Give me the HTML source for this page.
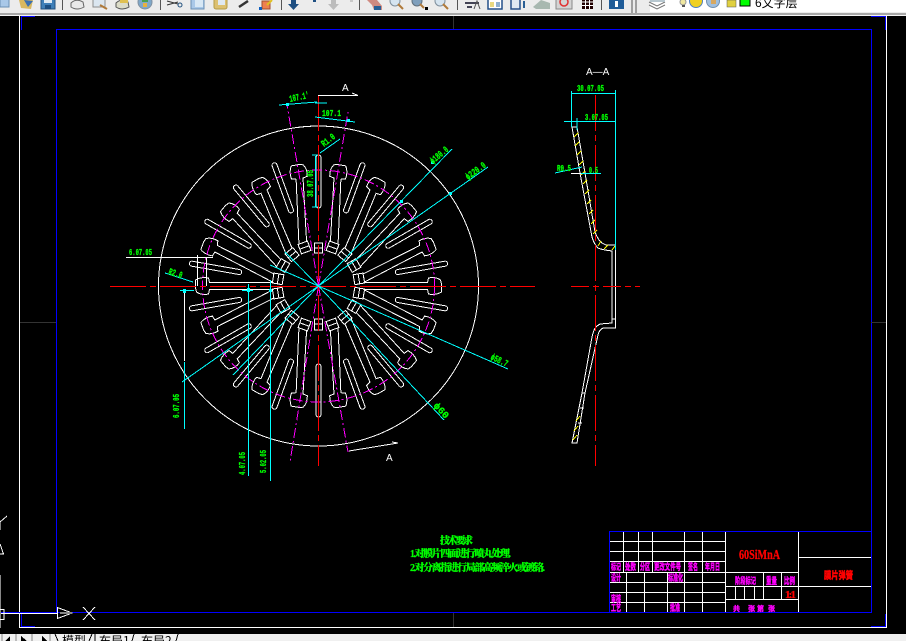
<!DOCTYPE html>
<html><head><meta charset="utf-8"><style>
html,body{margin:0;padding:0;background:#000}
body{width:906px;height:641px;overflow:hidden;position:relative}
svg{position:absolute;left:0;top:0;display:block}
path,rect,circle,use{shape-rendering:crispEdges}
.ic path,.ic circle,.ic rect{shape-rendering:auto}
.g{fill:#0f0;stroke:#0f0;stroke-width:.3;font-family:"Liberation Mono",monospace;font-size:9.5px;font-weight:bold}
.m{fill:#f0f;stroke:#f0f;stroke-width:.3;font-family:"Noto Sans CJK SC","WenQuanYi Zen Hei",sans-serif;font-size:9px;font-weight:900}
.z{fill:#0f0;stroke:#0f0;stroke-width:.25;font-family:"Liberation Serif","Noto Serif CJK SC",serif;font-size:10px;font-weight:900}
</style></head><body>
<svg width="906" height="641" viewBox="0 0 906 641" xmlns="http://www.w3.org/2000/svg">
<defs>
<g id="k"><path d="M4 -46L-3.500 -109L-8 -110Q-9.500 -117 -6 -122L-2 -123L6 -123Q9.500 -117 8 -110L3.500 -109L12 -44.600"/><path d="M3.100 -46.200L12.900 -44.400L11.200 -34.600L1.300 -36.400Z M2.200 -41.300L12 -39.500"/></g>
<g id="h"><path d="M-3.500 -45L-3.500 -109L-8 -110Q-9.500 -117 -6 -122L-2 -123L6 -123Q9.500 -117 8 -110L3.500 -109L3.500 -45"/></g>
<rect id="s" x="-2.500" y="-131" width="5" height="53" rx="2.500"/>
</defs>
<rect width="906" height="641" fill="#000"/>
<!-- frames -->
<g fill="none">
<path d="M19.500 15V627.500H886.500V15" stroke="#fff"/>
<rect x="56.500" y="29.500" width="815" height="583" stroke="#00f"/>
<path d="M0 612.500H56" stroke="#00f"/>
<path d="M21.500 30V16.500H35M871 16.500H885.500V30M21.500 614V626.500H35M871 626.500H885.500V614" stroke="#00f"/>
<path d="M20 322.500H56M871 322.500H886M453.500 16V29M453.500 613V627" stroke="#333"/>
<path d="M0 613.500H57" stroke="#fff"/>
<path d="M0.500 575V634" stroke="#888"/>
<path d="M0 609.500H4V619.500H0" stroke="#fff"/>
</g>
<g fill="none" stroke="#fff"><path d="M57.500 607.500L72 613L57.500 618.500Z"/><path d="M83 607L95 620M95 607L83 620"/><path d="M0 530V522L7 516M0 544L3.500 554H0"/></g>
<path d="M60 613H72" stroke="#888" stroke-width="2"/>
<!-- disc -->
<circle cx="318.500" cy="286" r="160" fill="none" stroke="#fff" stroke-width="1"/>
<g transform="translate(318.500 286)" fill="none" stroke="#fff" stroke-width="1">
<use href="#k" transform="rotate(10)"/><use href="#k" transform="rotate(30)"/><use href="#k" transform="rotate(50)"/><use href="#k" transform="rotate(70)"/>
<use href="#k" transform="rotate(110) scale(-1 1)"/><use href="#k" transform="rotate(130) scale(-1 1)"/><use href="#k" transform="rotate(150) scale(-1 1)"/><use href="#k" transform="rotate(170) scale(-1 1)"/>
<use href="#k" transform="rotate(-10) scale(-1 1)"/><use href="#k" transform="rotate(-30) scale(-1 1)"/><use href="#k" transform="rotate(-50) scale(-1 1)"/><use href="#k" transform="rotate(-70) scale(-1 1)"/>
<use href="#k" transform="rotate(-110)"/><use href="#k" transform="rotate(-130)"/><use href="#k" transform="rotate(-150)"/><use href="#k" transform="rotate(-170)"/>
<use href="#h" transform="rotate(90)"/><use href="#h" transform="rotate(-90)"/>
<use href="#s"/><use href="#s" transform="rotate(20)"/><use href="#s" transform="rotate(40)"/><use href="#s" transform="rotate(60)"/><use href="#s" transform="rotate(80)"/><use href="#s" transform="rotate(100)"/><use href="#s" transform="rotate(120)"/><use href="#s" transform="rotate(140)"/><use href="#s" transform="rotate(160)"/><use href="#s" transform="rotate(180)"/><use href="#s" transform="rotate(-20)"/><use href="#s" transform="rotate(-40)"/><use href="#s" transform="rotate(-60)"/><use href="#s" transform="rotate(-80)"/><use href="#s" transform="rotate(-100)"/><use href="#s" transform="rotate(-120)"/><use href="#s" transform="rotate(-140)"/><use href="#s" transform="rotate(-160)"/>
<path d="M-4 -43H4V-33H-4ZM-4 -38H4M-4 44H4V33H-4ZM-4 38H4"/>
<circle r="116" stroke="#f0f" stroke-dasharray="10 3 2 3"/>
</g>
<g fill="none" stroke="#f0f" stroke-width="1" stroke-dasharray="10 3 2 3">
<path d="M318.500 286L287 105M318.500 286L348 112M318.500 286L290 462M318.500 286L348 452"/>
</g>
<!-- section -->
<g fill="none" stroke="#fff" stroke-width="1">
<path d="M572 127H577L585 173L595 232Q598 240 602 243L606 245H615.500V328H603Q599 330 598 335L585 393L577 443H572L582 393L592 337Q594 328 597 326L600 324L612 323V251L605 250Q600 249 598 248Q594 244 592 237L580 173Z"/>
<path d="M612 319H616M582 393H585M580 408H584M578 423H582"/>
</g>
<g stroke="#ff0" stroke-width="1" fill="none">
<path d="M574 137L578 133M575 146L579 142M577 155L581 151M579 165L583 161M581 175L585 171M583 184L587 180M585 194L589 190M587 204L591 200M589 214L593 210M591 224L595 220M593 234L597 230M598 246L601 241M604 249L608 245M612 250L615 246M573 440L577 435M574 431L578 426M576 421L580 416"/>
</g>
<!-- centre lines -->
<g stroke="#f00" stroke-width="1" fill="none">
<path d="M110 286.500H535" stroke-dasharray="36 4 6 4"/>
<path d="M318.500 95V466" stroke-dasharray="36 4 6 4"/>
<path d="M571 286.500H640" stroke-dasharray="18 4 6 4"/>
<path d="M595.500 95V466" stroke-dasharray="36 4 6 4"/>
</g>
<!-- cyan -->
<g stroke="#0ff" stroke-width="1" fill="none">
<path d="M318.500 286L452 149M318.500 286L488 167M318.500 286L508 369M318.500 286L444 420M318.500 286L182 382M318.500 286L233 375M318.500 286L270 265M318.500 286L285 252"/>
<path d="M184.500 362V429M248.500 284V476M270.500 280V481M180 290.500H194M242 290.500H253M165 273L193 282"/>
<path d="M279 105L317 102M315 117L355 122M320 153L340 139M315 103H327"/>
<path d="M315.500 156V207M312 155H318M312 207H318"/>
<path d="M571.500 91V127M615.500 90V250M571.500 93.500H615.500M564 121.500H615M577 118V130M555 173L582 167M581 173.500H601"/>
</g>
<g fill="#0ff"><path d="M183 289h3v4h-3zM247 288h3v4h-3zM269 289h3v3h-3zM286 103h3v3h-3zM347 119h3v3h-3zM400 200h3v3h-3zM449 192h3v3h-3zM431 161h3v3h-3z"/></g>
<!-- white dims -->
<g stroke="#fff" stroke-width="1" fill="none">
<path d="M126 257.500H213M197.500 255V286M206.500 257V286M184.500 293V361M318 95.500H358M349 451L398 443M358 95.500L352 93M398 443L392 442M571 173.500H581"/>
</g>
<g fill="#fff" font-family="Liberation Sans,sans-serif" font-size="10"><text x="342" y="91">A</text><text x="386" y="461">A</text><text x="586" y="75">A—A</text></g>
<!-- labels -->
<text class="g" x="129" y="255" textLength="23" lengthAdjust="spacingAndGlyphs">6.07.05</text>
<text class="g" transform="translate(168 274)rotate(18)" textLength="14" lengthAdjust="spacingAndGlyphs">R2.0</text>
<text class="g" transform="translate(290 102)rotate(-12)" textLength="20" lengthAdjust="spacingAndGlyphs">107.1'</text>
<text class="g" x="322" y="116" textLength="19" lengthAdjust="spacingAndGlyphs">107.1</text>
<text class="g" transform="translate(324 147)rotate(-38)" textLength="15" lengthAdjust="spacingAndGlyphs">R1.0</text>
<text class="g" transform="translate(313 197)rotate(-90)" textLength="27" lengthAdjust="spacingAndGlyphs">38.07.05</text>
<text class="g" transform="translate(433 164)rotate(-40)" textLength="21" lengthAdjust="spacingAndGlyphs">ϕ180.0</text>
<text class="g" transform="translate(468 180)rotate(-36)" textLength="23" lengthAdjust="spacingAndGlyphs">ϕ220.0</text>
<text class="g" transform="translate(490 359)rotate(26)" textLength="18" lengthAdjust="spacingAndGlyphs">ϕ58.7</text>
<text class="g" transform="translate(433 406)rotate(47)" textLength="18" lengthAdjust="spacingAndGlyphs">ϕ60</text>
<text class="g" transform="translate(179 418)rotate(-90)" textLength="24" lengthAdjust="spacingAndGlyphs">6.07.05</text>
<text class="g" transform="translate(245 475)rotate(-90)" textLength="23" lengthAdjust="spacingAndGlyphs">4.07.05</text>
<text class="g" transform="translate(266 473)rotate(-90)" textLength="23" lengthAdjust="spacingAndGlyphs">5.02.05</text>
<text class="g" x="577" y="91" textLength="27" lengthAdjust="spacingAndGlyphs">30.07.05</text>
<text class="g" x="585" y="120" textLength="23" lengthAdjust="spacingAndGlyphs">3.07.05</text>
<text class="g" x="557" y="171" textLength="14" lengthAdjust="spacingAndGlyphs">R0.5</text>
<text class="g" x="589" y="173" textLength="9" lengthAdjust="spacingAndGlyphs">0.5</text>
<!-- notes -->
<text class="z" x="440" y="544" textLength="33">技术要求</text>
<text class="z" x="410" y="557" textLength="101">1.对膜片四面进行喷丸处理.</text>
<text class="z" x="410" y="571" textLength="135">2.对分离指进行局部高频淬火或镀铬.</text>
<!-- title block -->
<g stroke="#fff" fill="none" stroke-width="1">
<path d="M610 541.500H725M610 551.500H725M610 561.500H725M610 572.500H798M610 582.500H725M610 592.500H725M610 602.500H725"/>
<path d="M623.500 531V572M638.500 531V572M652.500 531V572M684.500 531V612M702.500 531V612M725.500 531V612M626.500 572V612M644.500 572V612M667.500 572V612"/>
<path d="M798.500 531V612M798 557.500H871M725 586.500H871M725 599.500H798M763.500 572V599M781.500 572V599M735.500 586V599M744.500 586V599M754.500 586V599"/>
</g>
<path d="M609.500 612V531.500H871.500V612" fill="none" stroke="#00f"/>
<text x="739" y="559" fill="#f00" stroke="#f00" stroke-width=".3" font-family="Liberation Serif,serif" font-size="14" font-weight="bold" textLength="41" lengthAdjust="spacingAndGlyphs">60SiMnA</text>
<text x="824" y="579" fill="#f00" stroke="#f00" stroke-width=".4" font-family="Noto Sans CJK SC,sans-serif" font-size="10" font-weight="900" textLength="29" lengthAdjust="spacingAndGlyphs">膜片弹簧</text>
<text x="785" y="598" fill="#f00" stroke="#f00" stroke-width=".3" font-family="Liberation Serif,serif" font-size="11" font-weight="bold" textLength="11">1:1</text>
<g>
<text class="m" x="611" y="570" textLength="10" lengthAdjust="spacingAndGlyphs">标记</text><text class="m" x="625" y="570" textLength="11" lengthAdjust="spacingAndGlyphs">处数</text><text class="m" x="640" y="570" textLength="10" lengthAdjust="spacingAndGlyphs">分区</text><text class="m" x="654" y="570" textLength="27" lengthAdjust="spacingAndGlyphs">更改文件号</text><text class="m" x="688" y="570" textLength="10" lengthAdjust="spacingAndGlyphs">签名</text><text class="m" x="705" y="570" textLength="15" lengthAdjust="spacingAndGlyphs">年月日</text>
<text class="m" x="611" y="581" textLength="10" lengthAdjust="spacingAndGlyphs">设计</text><text class="m" x="668" y="581" textLength="15" lengthAdjust="spacingAndGlyphs">标准化</text><text class="m" x="611" y="602" textLength="10" lengthAdjust="spacingAndGlyphs">审核</text><text class="m" x="611" y="611" textLength="10" lengthAdjust="spacingAndGlyphs">工艺</text><text class="m" x="670" y="611" textLength="10" lengthAdjust="spacingAndGlyphs">批准</text>
<text class="m" x="735" y="584" textLength="21" lengthAdjust="spacingAndGlyphs">阶段标记</text><text class="m" x="766" y="584" textLength="11" lengthAdjust="spacingAndGlyphs">重量</text><text class="m" x="784" y="584" textLength="11" lengthAdjust="spacingAndGlyphs">比例</text>
<text class="m" x="733" y="611" font-size="7" style="font-size:7px">共</text><text class="m" x="748" y="611" style="font-size:7px">张</text><text class="m" x="757" y="611" style="font-size:7px">第</text><text class="m" x="768" y="611" style="font-size:7px">张</text>
</g>
<!-- toolbar -->
<rect x="0" y="0" width="906" height="13" fill="#ececec"/>
<rect x="0" y="13" width="906" height="2" fill="#a8a8a8"/>
<rect x="0" y="15" width="906" height="1" fill="#f5f5f5"/>
<rect x="650" y="0" width="256" height="12" fill="#fff"/>
<path d="M62.500 0V10M160.500 0V10M281.500 0V10M359.500 0V10M457.500 0V10M601.500 0V10M632 0V13M636 0V13" stroke="#555"/>
<g class="ic">
<rect x="0" y="-2" width="9" height="9" fill="#a9c8e8" stroke="#6a8fb5"/>
<path d="M19 0L21 8L31 9L33 0Z" fill="#d8b860"/><path d="M24 0L28 7L33 1Z" fill="#3a6fb0"/>
<rect x="41" y="-2" width="14" height="11" fill="#3f7fb8" stroke="#234f7d"/><rect x="44" y="-2" width="8" height="5" fill="#dfe9f2"/><rect x="45" y="5" width="6" height="4" fill="#1c4d80"/>
<path d="M71 3Q76 -2 83 2L84 7Q77 11 71 7Z" fill="#e8e8e8" stroke="#666"/>
<rect x="93" y="-2" width="12" height="9" fill="#dbe6f0" stroke="#8d8d8d"/><path d="M100 5L107 9" stroke="#b07a3a" stroke-width="2"/>
<path d="M116 3Q121 -2 128 2L129 7Q122 11 116 7Z" fill="#dcdcc8" stroke="#555"/><rect x="120" y="-1" width="8" height="4" fill="#e0c050"/>
<circle cx="145" cy="2" r="7" fill="#7fa8c9" stroke="#8090a0"/><path d="M142 -2h6v4h-6z" fill="#4aa050"/><path d="M143 3h4v4h-4z" fill="#e8b040"/>
<path d="M167 1L178 4M167 5L178 2" stroke="#333" fill="none"/><circle cx="180" cy="5" r="2" fill="none" stroke="#24527f"/>
<rect x="191" y="-2" width="13" height="11" fill="#a9c8e8" stroke="#6a8fb5"/><rect x="195" y="-1" width="8" height="8" fill="#d8e8f5"/>
<rect x="214" y="-2" width="13" height="11" rx="2" fill="#dcc070" stroke="#b59b48"/><rect x="218" y="-1" width="7" height="6" fill="#dfe9f2"/>
<path d="M239 7L248 1" stroke="#333" stroke-width="2.500"/>
<rect x="262" y="1" width="8" height="8" fill="#ee8050" stroke="#a05030"/><rect x="259" y="7" width="3" height="3" fill="#1060c0"/><path d="M267 5L272 0" stroke="#e0c020" stroke-width="2"/>
<path d="M291 0H296V4H299L293.500 10L288 4H291Z" fill="#1f4f82"/>
<rect x="313" y="0" width="3" height="2" fill="#1f4f82"/>
<path d="M331 0H336V4H339L333.500 10L328 4H331Z" fill="#bcbcbc"/>
<rect x="350" y="0" width="3" height="2" fill="#c8c8c8"/>
<path d="M367 0L377 0L382 6V10H374L372 5Z" fill="#d08a80"/><rect x="374" y="6" width="7" height="4" fill="#2a5f95"/>
<circle cx="395" cy="1" r="5" fill="#d5e4f0" stroke="#7f8f9c"/><path d="M398 4L403 9" stroke="#b07a3a" stroke-width="2"/>
<circle cx="417" cy="1" r="5" fill="#7f9fbc" stroke="#606f7c"/><path d="M420 4L424 8" stroke="#b07a3a" stroke-width="2"/><rect x="425" y="7" width="3" height="3" fill="#000"/>
<circle cx="440" cy="1" r="5" fill="#d5e4f0" stroke="#7f8f9c"/><path d="M443 4L448 9" stroke="#b07a3a" stroke-width="2"/>
<path d="M465 3H479M467 7H472" stroke="#445" fill="none" stroke-width="2"/><path d="M474 9L477 1L480 9" stroke="#555" fill="none"/>
<rect x="488" y="-2" width="14" height="11" fill="#fff" stroke="#25508a" stroke-width="1.500"/><rect x="490" y="2" width="4" height="5" fill="#e8d880"/><rect x="496" y="2" width="4" height="5" fill="#8fb0d0"/>
<rect x="511" y="-2" width="9" height="11" fill="#dfe9f2" stroke="#25508a" stroke-width="1.500"/><path d="M524 1V8" stroke="#2a5f95" stroke-width="2"/>
<path d="M533 7L541 0L550 3V9H536Z" fill="#a8b8b0"/>
<rect x="556" y="-1" width="16" height="10" fill="#d4d4d4" stroke="#888"/><circle cx="564" cy="2" r="4" fill="none" stroke="#e03030" stroke-width="1.500"/>
<rect x="582" y="-2" width="11" height="11" fill="#200"/><path d="M585.500 0V9M589.500 0V9M582 2H593M582 5.500H593" stroke="#fff"/>
<rect x="609" y="-2" width="15" height="11" fill="#1f5c98"/><rect x="615" y="1" width="3" height="6" fill="#fff"/>
<path d="M649 2L657 6L665 2M649 5L657 9L665 5" stroke="#777" fill="none"/><rect x="650" y="-1" width="15" height="3" fill="#b8c8d0"/>
<circle cx="683" cy="2" r="3" fill="#f0e8a0" stroke="#999"/><rect x="682" y="5" width="3" height="2" fill="#555"/>
<circle cx="696" cy="1" r="6.500" fill="#f0d020" stroke="#5080c0"/>
<circle cx="713" cy="1" r="6.500" fill="#a0c0e0" stroke="#7090b0"/><rect x="711" y="0" width="5" height="4" fill="#d8a860"/>
<rect x="727" y="0" width="9" height="7" fill="#e0d040" stroke="#555" stroke-width=".5"/>
<rect x="740" y="-1" width="10" height="7" fill="#0f0" stroke="#000"/>
</g>
<text x="755" y="7" fill="#000" font-family="Liberation Sans,Noto Sans CJK SC,sans-serif" font-size="12">6文字层</text>
<!-- tabs -->
<rect x="0" y="628" width="906" height="13" fill="#000"/>
<rect x="0" y="634" width="906" height="7" fill="#f0f0f0"/>
<g fill="#000"><path d="M10 641V636L5 641ZM21 636V641H27ZM42 636V641H47Z"/></g>
<path d="M2 634V641M16 634V641M32 634V641M50 634V641" stroke="#888" fill="none"/>
<g font-family="WenQuanYi Zen Hei,Noto Sans CJK SC,sans-serif" font-size="12" fill="#000"><text x="62" y="645">模型</text><text x="99" y="645">布局1</text><text x="141" y="645">布局2</text></g>
<path d="M55 634L58 641M92 634L89 641M95 641L95 634M134 634L132 641M178 634L176 641" stroke="#000" fill="none"/>
</svg>
</body></html>
